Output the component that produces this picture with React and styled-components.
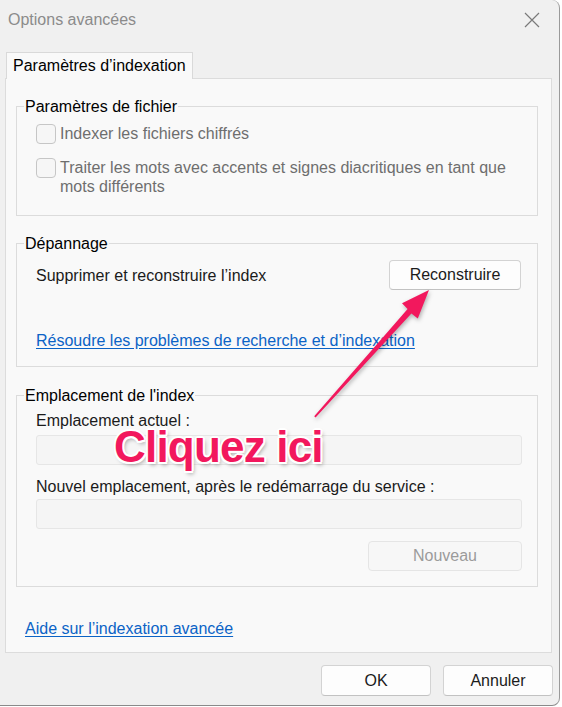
import React from "react";
import styled, { createGlobalStyle } from "styled-components";

const GlobalStyle = createGlobalStyle`
  html, body {
    margin: 0;
    padding: 0;
    background: #ffffff;
  }
  body {
    font-family: "Liberation Sans", Arial, sans-serif;
    font-size: 16px;
    color: #1b1b1b;
  }
`;

const Window = styled.div`
  position: relative;
  box-sizing: border-box;
  width: 560px;
  height: 706px;
  background: #f0f0f0;
  border-right: 1px solid #9a9a9a;
  border-bottom: 1px solid #8a8a8a;
  border-radius: 0 8px 8px 0;
  padding: 0 7px 0 5px;
  display: flex;
  flex-direction: column;
  overflow: hidden;
`;

const TitleBar = styled.div`
  height: 40px;
  display: flex;
  align-items: center;
  justify-content: space-between;
  padding-left: 3px;
`;

const Title = styled.span`
  color: #8b8b8b;
  font-size: 16px;
`;

const CloseButton = styled.button`
  border: none;
  background: transparent;
  padding: 0;
  margin-right: 12px;
  width: 16px;
  height: 16px;
  display: flex;
`;

const TabStrip = styled.div`
  display: flex;
  padding: 12px 0 0 1px;
  position: relative;
  z-index: 1;
`;

const Tab = styled.div`
  box-sizing: border-box;
  height: 27px;
  padding: 3px 6px 0;
  background: #f9f9f9;
  border: 1px solid #d9d9d9;
  border-bottom: none;
  margin-bottom: -1px;
  line-height: 19px;
  color: #000;
`;

const Panel = styled.div`
  background: #f9f9f9;
  border: 1px solid #dcdcdc;
  padding: 18px 13px 14px 10px;
  display: flex;
  flex-direction: column;
`;

const Group = styled.fieldset`
  margin: 0 0 ${(p) => p.$after || 0}px;
  border: 1px solid #dcdcdc;
  padding: ${(p) => p.$pad || "8px 15px 19px 19px"};
  display: flex;
  flex-direction: column;
  min-width: 0;

  legend {
    padding: 0 1px;
    margin-left: -12px;
    line-height: 19px;
    color: #000;
  }
`;

const CheckRow = styled.label`
  display: flex;
  align-items: flex-start;
  gap: 4px;
  line-height: 19px;
  color: #6e6e6e;
  margin-top: ${(p) => p.$top || 0}px;
`;

const Box = styled.span`
  flex: none;
  box-sizing: border-box;
  width: 20px;
  height: 20px;
  border: 1px solid #c6c6c6;
  border-radius: 4px;
  background: #f6f6f6;
`;

const ActionRow = styled.div`
  display: flex;
  align-items: center;
  justify-content: space-between;
  padding-right: 1px;
`;

const Text = styled.div`
  line-height: 19px;
  color: #1b1b1b;
  margin-top: ${(p) => p.$top || 0}px;
`;

const Link = styled.a`
  display: block;
  line-height: 19px;
  color: #0b63c6;
  text-decoration: underline;
  text-underline-offset: 2px;
  margin-top: ${(p) => p.$top || 0}px;
  margin-left: ${(p) => p.$indent || 0}px;
  align-self: flex-start;
`;

const Field = styled.div`
  box-sizing: border-box;
  height: 30px;
  margin-top: ${(p) => p.$top || 0}px;
  background: #f5f5f5;
  border: 1px solid #e6e6e6;
  border-radius: 3px;
`;

const Button = styled.button`
  box-sizing: border-box;
  width: ${(p) => p.$w}px;
  height: ${(p) => p.$h || 30}px;
  margin-top: ${(p) => p.$top || 0}px;
  font: inherit;
  font-size: 16px;
  color: ${(p) => (p.disabled ? "#9b9b9b" : "#1b1b1b")};
  background: ${(p) => (p.disabled ? "#f7f7f7" : "#fdfdfd")};
  border: 1px solid ${(p) => (p.disabled ? "#e5e5e5" : "#d3d3d3")};
  border-bottom-color: ${(p) => (p.disabled ? "#e5e5e5" : "#c2c2c2")};
  border-radius: 4px;
  padding: 0;
  align-self: ${(p) => (p.$end ? "flex-end" : "auto")};
`;

const Footer = styled.div`
  display: flex;
  justify-content: flex-end;
  gap: 12px;
  padding: 12px 0 0;
  margin-right: -1px;
`;

const Callout = styled.div`
  position: absolute;
  left: 114px;
  top: 425px;
  font-family: "Liberation Sans", Arial, sans-serif;
  font-weight: 700;
  font-size: 44px;
  line-height: 44px;
  letter-spacing: -0.8px;
  color: #f2185d;
  text-shadow:
    -2px 0 0 #fff, 2px 0 0 #fff, 0 -2px 0 #fff, 0 2px 0 #fff,
    -1.5px -1.5px 0 #fff, 1.5px -1.5px 0 #fff, -1.5px 1.5px 0 #fff, 1.5px 1.5px 0 #fff,
    2px 3px 4px rgba(0, 0, 0, 0.35);
  pointer-events: none;
`;

const Arrow = styled.svg`
  position: absolute;
  left: 0;
  top: 0;
  overflow: visible;
  pointer-events: none;
  filter: drop-shadow(1px 2px 2px rgba(0, 0, 0, 0.3));
`;

export default function App() {
  return (
    <>
      <GlobalStyle />
      <Window>
        <TitleBar>
          <Title>Options avancées</Title>
          <CloseButton aria-label="Fermer">
            <svg width="16" height="16" viewBox="0 0 16 16">
              <path d="M1 1 L15 15 M15 1 L1 15" stroke="#7a7a7a" strokeWidth="1.2" fill="none" />
            </svg>
          </CloseButton>
        </TitleBar>

        <TabStrip>
          <Tab>Paramètres d’indexation</Tab>
        </TabStrip>

        <Panel>
          <Group $after={18}>
            <legend>Paramètres de fichier</legend>
            <CheckRow>
              <Box />
              Indexer les fichiers chiffrés
            </CheckRow>
            <CheckRow $top={14}>
              <Box />
              <span>Traiter les mots avec accents et signes diacritiques en tant que mots différents</span>
            </CheckRow>
          </Group>

          <Group $after={19} $pad="7px 15px 16px 19px">
            <legend>Dépannage</legend>
            <ActionRow>
              <Text>Supprimer et reconstruire l’index</Text>
              <Button $w={132}>Reconstruire</Button>
            </ActionRow>
            <Link href="#" $top={41}>
              Résoudre les problèmes de recherche et d’indexation
            </Link>
          </Group>

          <Group $pad="6px 15px 15px 19px">
            <legend>Emplacement de l'index</legend>
            <Text>Emplacement actuel :</Text>
            <Field $top={5} />
            <Text $top={12}>Nouvel emplacement, après le redémarrage du service :</Text>
            <Field $top={3} />
            <Button $w={154} $top={12} $end disabled>
              Nouveau
            </Button>
          </Group>

          <Link href="#" $top={32} $indent={9}>
            Aide sur l’indexation avancée
          </Link>
        </Panel>

        <Footer>
          <Button $w={110} $h={31}>OK</Button>
          <Button $w={110} $h={31}>Annuler</Button>
        </Footer>

        <Arrow width="562" height="707" viewBox="0 0 562 707">
          <polygon
            fill="#f2185d"
            points="315.6,417.6 411.4,313.6 417.8,318.6 429,290 402,303.2 407.6,309 314.2,416.2"
          />
        </Arrow>
        <Callout>Cliquez ici</Callout>
      </Window>
    </>
  );
}
